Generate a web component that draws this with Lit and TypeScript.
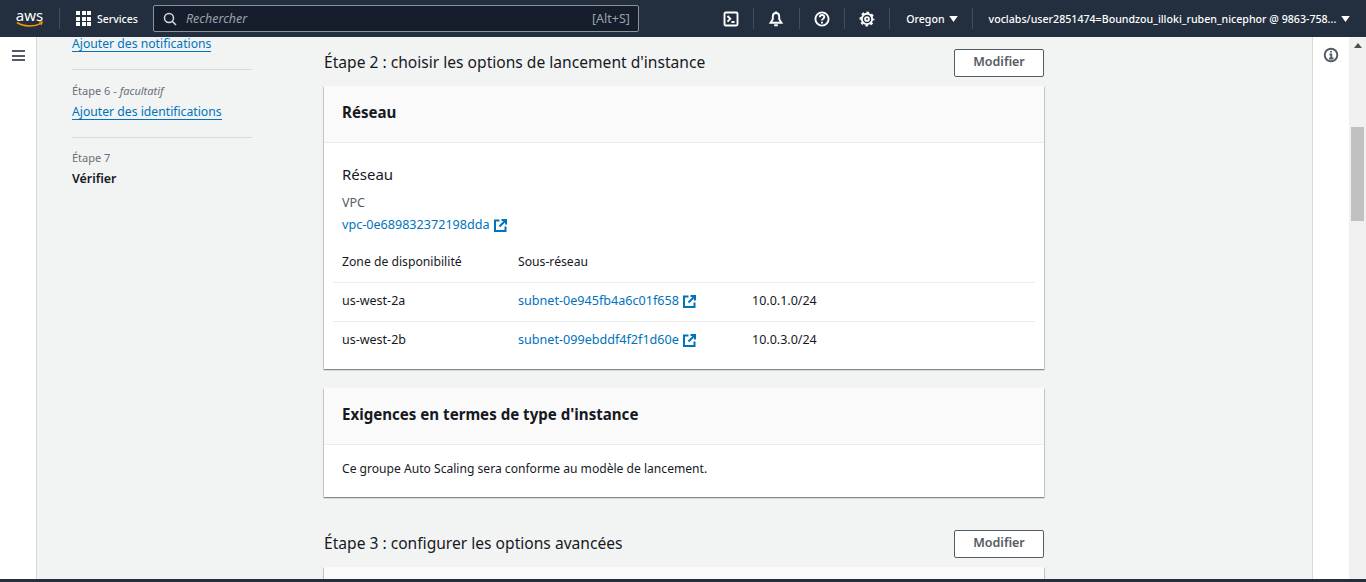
import { LitElement, html, css, svg } from "lit";
import { customElement } from "lit/decorators.js";

const extIcon = html`<svg class="ext" viewBox="0 0 13 13" width="13" height="13" fill="none" stroke="#0073bb" stroke-width="2">
  <path d="M5.5 1.500H1v10.500h10.500V7.500" /><path d="M7.500 1h4.500v4.500M12 1L5.500 7.500" />
</svg>`;

const caret = html`<svg class="caret" viewBox="0 0 10 7" width="9" height="6"><path d="M0 0h10L5 7z" fill="#fff" /></svg>`;

const icons = {
  shell: svg`<rect x="1.500" y="1.500" width="13" height="13" rx="1.200" /><path d="M4.500 5l2.800 2.800-2.800 2.800M8.500 11h3" />`,
  bell: svg`<path d="M8 2c-2.300 0-3.200 1.800-3.200 3.700v2.500L2.500 11.700h11l-2.300-3.500V5.700C11.200 3.800 10.300 2 8 2z" /><path d="M6.200 14.200h3.600M8 .5v1.500" />`,
  help: svg`<circle cx="8" cy="8" r="6.600" /><path d="M5.800 6.300c0-3 4.500-3 4.500-.2 0 1.700-2.300 1.700-2.300 3.500M8 10.800v1.700" />`,
  gear: svg`<circle cx="8" cy="8" r="5.200" /><circle cx="8" cy="8" r="6.500" stroke-dasharray="2.550 2.550" stroke-dashoffset="1.270" /><circle cx="8" cy="8" r="1.900" />`,
};

@customElement("app-root")
export class AppRoot extends LitElement {
  static styles = css`
    :host {
      display: flex;
      flex-direction: column;
      height: 582px;
      overflow: hidden;
      background: #f2f3f3;
      color: #16191f;
      font-family: "Noto Sans", "Open Sans", sans-serif;
      font-size: 12.5px;
    }
    header {
      flex: none;
      height: 37px;
      display: flex;
      align-items: center;
      background: #232f3e;
      color: #fff;
    }
    .logo {
      width: 59px;
      display: flex;
      flex-direction: column;
      align-items: center;
      font-size: 15px;
      line-height: 12px;
    }
    .logo span {
      height: 12px;
    }
    .sep {
      flex: none;
      width: 1px;
      height: 21px;
      background: #414d5c;
    }
    .services {
      display: flex;
      align-items: center;
      gap: 6px;
      margin: 0 15px 0 16px;
      font-size: 10.5px;
      font-weight: 500;
    }
    .grid {
      display: grid;
      grid-template-columns: repeat(3, 4px);
      gap: 1.5px;
    }
    .grid i {
      width: 4px;
      height: 4px;
      background: #fff;
    }
    .search {
      flex: none;
      width: 486px;
      height: 27px;
      box-sizing: border-box;
      display: flex;
      align-items: center;
      padding: 0 8px 0 9px;
      gap: 9px;
      background: #161e2d;
      border: 1px solid #879596;
      border-radius: 2px;
      color: #95a5a6;
    }
    .search em {
      flex: 1;
    }
    .tools {
      display: flex;
      align-items: center;
      margin-left: 70px;
      flex: 1;
    }
    .tool {
      width: 44.33px;
      display: flex;
      justify-content: center;
    }
    .tool svg,
    .info svg {
      fill: none;
      stroke: #fff;
      stroke-width: 1.9;
    }
    .region {
      display: flex;
      align-items: center;
      gap: 4px;
      padding: 0 14px 0 16px;
      font-size: 10.6px;
      font-weight: 500;
    }
    .account {
      display: flex;
      align-items: center;
      gap: 5px;
      padding-left: 16px;
      font-size: 10.63px;
      font-weight: 500;
      white-space: nowrap;
    }
    .body {
      flex: 1;
      min-height: 0;
      display: flex;
    }
    .rail {
      flex: none;
      width: 37px;
      box-sizing: border-box;
      background: #fff;
      border-right: 1px solid #d5dbdb;
      display: flex;
      justify-content: center;
      padding-top: 13px;
    }
    .burger {
      width: 13px;
      height: 11px;
      border-top: 2px solid #545b64;
      border-bottom: 2px solid #545b64;
      box-sizing: border-box;
    }
    .burger::after {
      content: "";
      display: block;
      height: 2px;
      margin-top: 2.5px;
      background: #545b64;
    }
    .steps {
      flex: none;
      width: 180px;
      margin: -2px 0 0 35px;
    }
    .step {
      padding-bottom: 17px;
      margin-bottom: 12px;
      border-bottom: 1px solid #d5dbdb;
    }
    .step:last-child {
      border: none;
      margin-top: -1px;
    }
    .step small {
      display: block;
      font-size: 11px;
      line-height: 18px;
      color: #687078;
      margin-bottom: 3px;
    }
    .step a {
      font-size: 12.2px;
      line-height: 15px;
      color: #0073bb;
      border-bottom: 1px solid #0073bb;
      display: inline-block;
    }
    .step b {
      font-weight: 600;
      font-size: 12.4px;
    }
    main {
      flex: none;
      width: 720px;
      margin-left: 72px;
      padding-top: 12px;
    }
    .step-head {
      height: 28px;
      display: flex;
      align-items: center;
      justify-content: space-between;
      margin-bottom: 9px;
    }
    .step-head h2 {
      margin: 0 0 2px;
      font-size: 15.6px;
      font-weight: 400;
    }
    button {
      width: 90px;
      height: 28px;
      background: #fff;
      border: 1px solid #545b64;
      border-radius: 2px;
      color: #545b64;
      font: 600 12.5px "Noto Sans", sans-serif;
      padding: 0 0 3px;
    }
    .card {
      background: #fff;
      box-shadow: 0 1px 1px 0 rgba(0, 28, 36, 0.3), 1px 1px 1px 0 rgba(0, 28, 36, 0.15),
        -1px 1px 1px 0 rgba(0, 28, 36, 0.15);
      margin-bottom: 19px;
    }
    .card-head {
      height: 57px;
      box-sizing: border-box;
      display: flex;
      align-items: center;
      padding: 0 18px 4px;
      background: #fafafa;
      border-bottom: 1px solid #eaeded;
    }
    .card-head h3 {
      margin: 0;
      font-size: 15.1px;
      font-weight: 700;
    }
    .net {
      padding: 21px 9px 9px;
    }
    .net h4 {
      margin: 0 9px 9px;
      font-size: 15px;
      font-weight: 400;
      line-height: 21px;
    }
    .vpc {
      margin: 0 9px 9px;
    }
    .vpc div {
      color: #545b64;
      line-height: 18px;
      margin-bottom: 4px;
    }
    a.id {
      color: #0073bb;
      font-size: 12.6px;
    }
    .ext {
      vertical-align: -3px;
      margin-left: 4px;
    }
    .row {
      display: flex;
      align-items: center;
      height: 39px;
      box-sizing: border-box;
      padding: 0 0 3px 9px;
      border-top: 1px solid #eaeded;
    }
    .row.first {
      border: none;
      height: 40px;
      padding-bottom: 2px;
      font-size: 12.2px;
    }
    .row > :nth-child(1) {
      width: 176px;
    }
    .row > :nth-child(2) {
      width: 234px;
    }
    .note {
      padding: 15px 18px 19px;
      line-height: 18px;
      font-size: 12.1px;
    }
    .next {
      margin-top: 33px;
    }
    .info {
      flex: none;
      width: 37px;
      margin-left: auto;
      background: #fff;
      border-left: 1px solid #d5dbdb;
      box-sizing: border-box;
      display: flex;
      justify-content: center;
      padding-top: 10px;
    }
    .info svg {
      stroke: #545b64;
    }
    .scroll {
      flex: none;
      width: 17px;
      background: #f1f1f1;
      display: flex;
      flex-direction: column;
      align-items: center;
    }
    .scroll .up {
      margin-top: 6px;
    }
    .scroll .thumb {
      width: 13px;
      height: 94px;
      margin-top: 79px;
      background: #c1c1c1;
    }
    footer {
      flex: none;
      height: 3px;
      background: #232f3e;
    }
  `;

  private icon(name: keyof typeof icons) {
    return html`<div class="tool"><svg viewBox="0 0 16 16" width="16" height="16">${icons[name]}</svg></div>`;
  }

  private stepHead(title: string) {
    return html`<div class="step-head"><h2>${title}</h2><button>Modifier</button></div>`;
  }

  render() {
    return html`
      <header>
        <div class="logo">
          <span>aws</span>
          <svg viewBox="0 0 28 8" width="28" height="8">
            <path d="M1 1.500c7 4.500 17 4.500 24 .8" fill="none" stroke="#ff9900" stroke-width="1.500" />
            <path d="M23 .8l3.300.3-1.300 3" fill="none" stroke="#ff9900" stroke-width="1.200" />
          </svg>
        </div>
        <div class="sep"></div>
        <div class="services">
          <div class="grid">${Array.from({ length: 9 }, () => html`<i></i>`)}</div>
          Services
        </div>
        <div class="search">
          <svg viewBox="0 0 14 14" width="14" height="14" fill="none" stroke="#d5dbdb" stroke-width="1.500">
            <circle cx="6" cy="6" r="4.500" /><path d="M9.500 9.500L13 13" />
          </svg>
          <em>Rechercher</em>
          <span>[Alt+S]</span>
        </div>
        <div class="tools">
          ${this.icon("shell")}<div class="sep"></div>
          ${this.icon("bell")}<div class="sep"></div>
          ${this.icon("help")}<div class="sep"></div>
          ${this.icon("gear")}<div class="sep"></div>
          <div class="region">Oregon ${caret}</div>
          <div class="sep"></div>
          <div class="account">voclabs/user2851474=Boundzou_illoki_ruben_nicephor @ 9863-758... ${caret}</div>
        </div>
      </header>
      <div class="body">
        <div class="rail"><div class="burger"></div></div>
        <nav class="steps">
          <div class="step"><a>Ajouter des notifications</a></div>
          <div class="step">
            <small>Étape 6 - <em>facultatif</em></small>
            <a>Ajouter des identifications</a>
          </div>
          <div class="step">
            <small>Étape 7</small>
            <b>Vérifier</b>
          </div>
        </nav>
        <main>
          ${this.stepHead("Étape 2 : choisir les options de lancement d'instance")}
          <section class="card">
            <div class="card-head"><h3>Réseau</h3></div>
            <div class="net">
              <h4>Réseau</h4>
              <div class="vpc">
                <div>VPC</div>
                <a class="id">vpc-0e689832372198dda${extIcon}</a>
              </div>
              <div class="row first"><span>Zone de disponibilité</span><span>Sous-réseau</span></div>
              <div class="row">
                <span>us-west-2a</span>
                <span><a class="id">subnet-0e945fb4a6c01f658${extIcon}</a></span>
                <span>10.0.1.0/24</span>
              </div>
              <div class="row">
                <span>us-west-2b</span>
                <span><a class="id">subnet-099ebddf4f2f1d60e${extIcon}</a></span>
                <span>10.0.3.0/24</span>
              </div>
            </div>
          </section>
          <section class="card">
            <div class="card-head"><h3>Exigences en termes de type d'instance</h3></div>
            <div class="note">Ce groupe Auto Scaling sera conforme au modèle de lancement.</div>
          </section>
          <div class="next">${this.stepHead("Étape 3 : configurer les options avancées")}</div>
          <section class="card"><div class="card-head"></div></section>
        </main>
        <aside class="info">
          <svg viewBox="0 0 16 16" width="16" height="16">
            <circle cx="8" cy="8" r="6.300" /><path d="M8 4v1.500M6.500 7.500H8.300V11M6 11.500h4.500" />
          </svg>
        </aside>
        <div class="scroll">
          <svg class="up" viewBox="0 0 8 5" width="8" height="5"><path d="M0 5h8L4 0z" fill="#505050" /></svg>
          <div class="thumb"></div>
        </div>
      </div>
      <footer></footer>
    `;
  }
}
